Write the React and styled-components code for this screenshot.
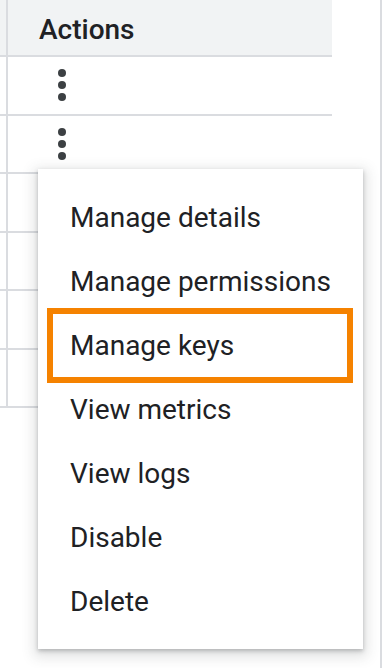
import React from "react";
import styled, { createGlobalStyle } from "styled-components";

const GlobalStyle = createGlobalStyle`
  html, body {
    margin: 0;
    padding: 0;
    background: #fff;
    font-family: Roboto, "Liberation Sans", Arial, sans-serif;
  }
  * { box-sizing: border-box; }
`;

const Page = styled.div`
  position: relative;
  width: 382px;
  height: 668px;
  border-right: 2px solid #dadce0;
  overflow: hidden;
`;

const Table = styled.div`
  width: 332px;
  display: flex;
  flex-direction: column;
`;

const Row = styled.div`
  display: flex;
  height: ${p => (p.header ? "57px" : "58.5px")};
  background: ${p => (p.header ? "#f1f3f4" : "#fff")};
  border-bottom: 2px solid #dadce0;
`;

const Stub = styled.div`
  width: 8px;
  flex: none;
  border-right: 2px solid #dadce0;
`;

const Cell = styled.div`
  flex: 1;
  display: flex;
  align-items: center;
  padding-left: ${p => (p.header ? "31px" : "30px")};
  padding-top: ${p => (p.header ? "3px" : "0")};
  font-size: 28px;
  font-weight: ${p => (p.header ? 500 : 400)};
  color: #202124;
`;

const Kebab = styled.svg`
  width: 48px;
  height: 48px;
  fill: #3c4043;
`;

const Menu = styled.ul`
  position: absolute;
  top: 169px;
  left: 38px;
  width: 325px;
  margin: 0;
  padding: 16px 0;
  list-style: none;
  background: #fff;
  box-shadow: 0 2px 4px 0 rgba(60, 64, 67, 0.3),
    0 4px 12px 4px rgba(60, 64, 67, 0.15);
`;

const Item = styled.li`
  position: relative;
  height: 64px;
  display: flex;
  align-items: center;
  padding-left: 32px;
  font-size: 28px;
  color: #202124;

  &::after {
    content: "";
    display: ${p => (p.marked ? "block" : "none")};
    position: absolute;
    top: -5px;
    bottom: -6px;
    left: 9px;
    right: 10px;
    border: 6px solid #f58200;
  }
`;

const MoreVert = () => (
  <Kebab viewBox="0 0 24 24">
    <circle cx="12" cy="6" r="2" />
    <circle cx="12" cy="12" r="2" />
    <circle cx="12" cy="18" r="2" />
  </Kebab>
);

const items = [
  "Manage details",
  "Manage permissions",
  "Manage keys",
  "View metrics",
  "View logs",
  "Disable",
  "Delete",
];

export default function App() {
  return (
    <Page>
      <GlobalStyle />
      <Table>
        <Row header>
          <Stub />
          <Cell header>Actions</Cell>
        </Row>
        {[0, 1, 2, 3, 4, 5].map(i => (
          <Row key={i}>
            <Stub />
            <Cell>
              <MoreVert />
            </Cell>
          </Row>
        ))}
      </Table>
      <Menu>
        {items.map(label => (
          <Item key={label} marked={label === "Manage keys"}>
            {label}
          </Item>
        ))}
      </Menu>
    </Page>
  );
}
